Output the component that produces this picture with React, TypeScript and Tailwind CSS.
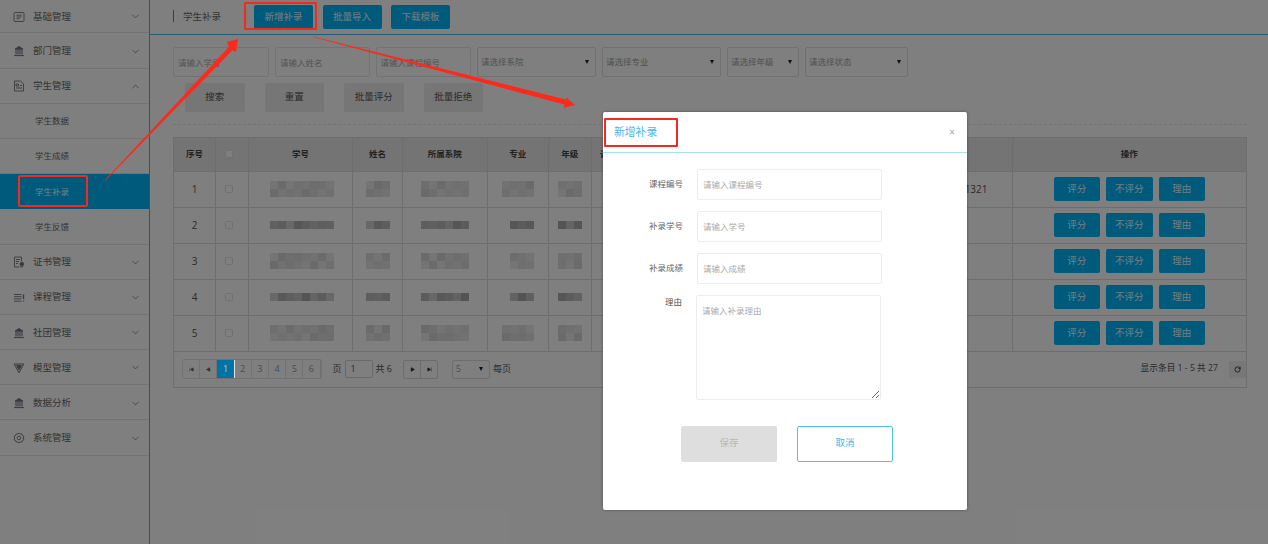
import React from "react";
import { ChevronDown, ChevronUp, RotateCw, SkipBack, SkipForward, Play } from "lucide-react";

const FONT = "font-['Open_Sans','Noto_Sans_CJK_SC',sans-serif]";

function IconBox() {
  return (
    <svg width="12" height="12" viewBox="0 0 12 12" fill="none" stroke="currentColor" strokeWidth="0.9">
      <rect x="1" y="1.5" width="10" height="9" rx="1" />
      <path d="M3.5 4.2h5M3.5 6h5M3.5 7.8h3" />
    </svg>
  );
}
function IconBank() {
  return (
    <svg width="12" height="12" viewBox="0 0 12 12" fill="none" stroke="currentColor" strokeWidth="1">
      <path d="M2 4.2 6 1.5l4 2.7z" fill="currentColor" />
      <path d="M3 5v4.6M5 5v4.6M7 5v4.6M9 5v4.6" strokeWidth="1.1" />
      <path d="M1 10.6h10" strokeWidth="1" />
    </svg>
  );
}
function IconStudent() {
  return (
    <svg width="12" height="12" viewBox="0 0 12 12" fill="none" stroke="currentColor" strokeWidth="0.9">
      <path d="M7.5 1H1.5v10h9V4z" />
      <path d="M3 4h2.5v2H3zM3 8h6M7 5.5h2" />
    </svg>
  );
}
function IconCert() {
  return (
    <svg width="12" height="12" viewBox="0 0 12 12" fill="none" stroke="currentColor" strokeWidth="0.9">
      <path d="M8.5 5V1H1.5v10h5" />
      <path d="M3 3.5h4M3 5.5h3M3 7.5h2" />
      <circle cx="8.8" cy="8" r="1.8" fill="currentColor" />
      <path d="M8 9.5v2M9.6 9.5v2" />
    </svg>
  );
}
function IconCourse() {
  return (
    <svg width="12" height="12" viewBox="0 0 12 12" fill="none" stroke="currentColor" strokeWidth="0.9">
      <path d="M1 2.5h7.5M1 4.7h7.5M1 6.9h7.5M1 9.2h7.5" />
      <path d="M10.5 2.5v4.6M10.5 8.4v1" strokeWidth="1.4" />
    </svg>
  );
}
function IconModel() {
  return (
    <svg width="12" height="12" viewBox="0 0 12 12" fill="none" stroke="currentColor" strokeWidth="1">
      <path d="M1.2 2h9.6L6 10.8z" />
      <path d="M3.6 3.6h4.8L6 7.8z" fill="currentColor" />
    </svg>
  );
}
function IconGear() {
  return (
    <svg width="12" height="12" viewBox="0 0 12 12" fill="none" stroke="currentColor" strokeWidth="0.9">
      <path d="M6 1l1.2 1.1 1.7-.2.5 1.6 1.5.8-.6 1.7.6 1.7-1.5.8-.5 1.6-1.7-.2L6 11l-1.2-1.1-1.7.2-.5-1.6-1.5-.8.6-1.7-.6-1.7 1.5-.8.5-1.6 1.7.2z" />
      <circle cx="6" cy="6" r="1.8" />
    </svg>
  );
}

function NavRow({ icon, label, open, first }: { icon: React.ReactNode; label: string; open?: boolean; first?: boolean }) {
  return (
    <div className={`flex items-center border-b border-[#e6e6e6] pl-[13px] pr-[8px] pt-[1.5px] text-[#666666] ${first ? "h-[33.4px]" : "h-[35.2px]"}`}>
      <span className="flex w-[20px] shrink-0 text-[#6f7480]">{icon}</span>
      <span className="flex-1 text-[9.5px]">{label}</span>
      {open ? <ChevronUp size={11} strokeWidth={1.5} /> : <ChevronDown size={11} strokeWidth={1.5} />}
    </div>
  );
}

function SubRow({ label, active }: { label: string; active?: boolean }) {
  return (
    <div className={`flex h-[35.2px] items-center pl-[35px] pt-[1.5px] text-[8.5px] ${active ? "bg-[#00b4f8] text-[#e6fbff]" : "border-b border-[#e6e6e6] text-[#666666]"}`}>
      {label}
    </div>
  );
}

function Sidebar() {
  return (
    <aside className="w-[150px] shrink-0 border-r border-[#4fb5e6]">
      <NavRow first icon={<IconBox />} label="基础管理" />
      <NavRow icon={<IconBank />} label="部门管理" />
      <NavRow icon={<IconStudent />} label="学生管理" open />
      <SubRow label="学生数据" />
      <SubRow label="学生成绩" />
      <SubRow label="学生补录" active />
      <SubRow label="学生反馈" />
      <NavRow icon={<IconCert />} label="证书管理" />
      <NavRow icon={<IconCourse />} label="课程管理" />
      <NavRow icon={<IconBank />} label="社团管理" />
      <NavRow icon={<IconModel />} label="模型管理" />
      <NavRow icon={<IconBank />} label="数据分析" />
      <NavRow icon={<IconGear />} label="系统管理" />
    </aside>
  );
}

function PrimaryBtn({ label, w, h }: { label: string; w: string; h: string }) {
  return (
    <button className={`flex items-center justify-center rounded-[2px] bg-[#00b4f8] text-[9.5px] text-[#e8fbff] ${w} ${h}`}>
      {label}
    </button>
  );
}

function Field({ ph, w }: { ph: string; w: string }) {
  return (
    <input
      placeholder={ph}
      className={`h-[30px] rounded-[2px] border border-[#e6e6e6] bg-white px-[4px] text-[8.5px] outline-none placeholder:text-[#a8a8a8] ${w}`}
    />
  );
}

function SelectBox({ ph, w }: { ph: string; w: string }) {
  return (
    <div className={`flex h-[30px] items-center justify-between rounded-[2px] border border-[#e0e0e0] bg-white pl-[3px] pr-[6px] text-[8.5px] text-[#a0a0a0] ${w}`}>
      <span>{ph}</span>
      <span className="h-0 w-0 border-x-[2.5px] border-t-[4px] border-x-transparent border-t-[#222]" />
    </div>
  );
}

function GrayBtn({ label }: { label: string }) {
  return (
    <button className="flex h-[29px] w-[59.5px] items-center justify-center rounded-[2px] bg-[#ececec] text-[9.5px] text-[#555]">
      {label}
    </button>
  );
}

const LIGHT = ["#e8e8e8", "#dedede", "#d8dce0", "#e4e4e4", "#d4d4d4", "#e0e0e0", "#eaeaea", "#dadada", "#d6d6d6", "#e2e2e2"];
const DARK = ["#c4c4c4", "#b8b8b8", "#b4b8bc", "#c0c0c0", "#acacac", "#bcbcbc", "#c8c8c8", "#b0b0b0", "#a8a8a8", "#d0d0d0"];

function Mosaic({ cols, rows, seed, lead = 0 }: { cols: number; rows: number; seed: number; lead?: number }) {
  const palette = rows === 1 ? DARK : LIGHT;
  const cells = Array.from({ length: cols * rows }, (_, i) =>
    i % cols < lead ? "transparent" : palette[(i * 7 + seed * 3 + (i % 3)) % palette.length]
  );
  return (
    <div className="mx-auto flex flex-wrap" style={{ width: cols * 8 }}>
      {cells.map((c, i) => (
        <div key={i} className="h-[8px] w-[8px]" style={{ backgroundColor: c }} />
      ))}
    </div>
  );
}

function Check() {
  return <span className="ml-[9px] block h-[8px] w-[8px] rounded-[1.5px] border border-[#e0e0e0] bg-white" />;
}

const HEAD = ["序号", "", "学号", "姓名", "所属系院", "专业", "年级", "课程名称", "课程编号", "补录学号", "操作"];
const MOSAIC_ROWS = [2, 1, 2, 1, 2];
const MAJOR_LEAD = [0, 1, 1, 1, 0];

const th = "h-[33px] border-r border-b border-[#dcdcdc] bg-[#e9e9e9] text-center text-[8.5px] font-bold text-[#444]";
const td = "h-[36px] border-r border-b border-[#dcdcdc] text-center align-middle text-[10px] text-[#555]";

function DataTable() {
  return (
    <table className="w-full table-fixed border-collapse">
      <colgroup>
        <col className="w-[41.5px]" />
        <col className="w-[33px]" />
        <col className="w-[104px]" />
        <col className="w-[50px]" />
        <col className="w-[84.5px]" />
        <col className="w-[61.5px]" />
        <col className="w-[42.5px]" />
        <col className="w-[52px]" />
        <col className="w-[150px]" />
        <col className="w-[219px]" />
        <col />
      </colgroup>
      <thead>
        <tr>
          {HEAD.map((h, i) => (
            <th key={i} className={`${th} ${i === 10 ? "border-r-0" : ""}`}>
              {i === 1 ? <Check /> : h}
            </th>
          ))}
        </tr>
      </thead>
      <tbody>
        {MOSAIC_ROWS.map((rows, r) => (
          <tr key={r}>
            <td className={td}>{r + 1}</td>
            <td className={td}><Check /></td>
            <td className={`${td} pl-[3px]`}><Mosaic cols={8} rows={rows} seed={r} /></td>
            <td className={td}><Mosaic cols={3} rows={rows} seed={r + 2} /></td>
            <td className={td}><Mosaic cols={6} rows={rows} seed={r + 4} /></td>
            <td className={td}><Mosaic cols={4} rows={rows} seed={r + 1} lead={MAJOR_LEAD[r]} /></td>
            <td className={td}><Mosaic cols={3} rows={rows} seed={r + 5} /></td>
            <td className={td} />
            <td className={td} />
            <td className={`${td} pr-[24px] text-right text-[8.5px]`}>{r === 0 ? "1321" : ""}</td>
            <td className={`${td} border-r-0`}>
              <div className="flex items-center justify-center gap-[6px]">
                <PrimaryBtn label="评分" w="w-[46px]" h="h-[24px]" />
                <PrimaryBtn label="不评分" w="w-[47px]" h="h-[24px]" />
                <PrimaryBtn label="理由" w="w-[46px]" h="h-[24px]" />
              </div>
            </td>
          </tr>
        ))}
      </tbody>
    </table>
  );
}

function PageCell({ children, active }: { children: React.ReactNode; active?: boolean }) {
  return (
    <span
      className={`flex h-[18px] w-[17.2px] items-center justify-center border-r border-[#e4e4e4] text-[9px] ${
        active ? "relative z-20 bg-[#0073a6] text-[#a8cfe0]" : "text-[#7a9cc6]"
      }`}
    >
      {children}
    </span>
  );
}

function Footer() {
  return (
    <div className="flex h-[35px] items-center justify-between pl-[8px] text-[9px] text-[#555]">
      <div className="flex items-center">
        <div className="flex rounded-[2px] border border-[#e4e4e4]">
          <PageCell><SkipBack size={5} fill="#666" stroke="#666" /></PageCell>
          <PageCell><Play size={5} fill="#666" stroke="#666" className="rotate-180" /></PageCell>
          {[1, 2, 3, 4, 5, 6].map((n) => (
            <PageCell key={n} active={n === 1}>{n}</PageCell>
          ))}
        </div>
        <span className="ml-[11px] text-[9px]">页</span>
        <span className="ml-[3px] flex h-[18px] w-[28px] items-center rounded-[2px] border border-[#d4d4d4] bg-white pl-[5px]">1</span>
        <span className="ml-[3px]">共 6</span>
        <div className="ml-[11px] flex rounded-[2px] border border-[#d8d8d8]">
          <span className="flex h-[17px] w-[17px] items-center justify-center border-r border-[#d8d8d8]"><Play size={5} fill="#333" stroke="#333" /></span>
          <span className="flex h-[17px] w-[16px] items-center justify-center"><SkipForward size={5} fill="#333" stroke="#333" /></span>
        </div>
        <div className="ml-[14px] flex h-[19px] w-[38px] items-center justify-between rounded-[2px] border border-[#dcdcdc] px-[3px] pr-[6px] text-[#a0a0a0]">
          <span>5</span>
          <span className="h-0 w-0 border-x-[2.5px] border-t-[4px] border-x-transparent border-t-[#222]" />
        </div>
        <span className="ml-[3px]">每页</span>
      </div>
      <div className="flex items-center">
        <span className="text-[8.7px]">显示条目 1 - 5 共 27</span>
        <span className="ml-[11px] flex h-[17px] w-[17px] items-center justify-center bg-[#eeeeee]">
          <RotateCw size={7} strokeWidth={3} className="text-[#333]" />
        </span>
      </div>
    </div>
  );
}

function ModalRow({ label, ph }: { label: string; ph: string }) {
  return (
    <div className="flex items-center">
      <span className="w-[66px] text-right text-[8.5px] text-[#666]">{label}</span>
      <input
        placeholder={ph}
        className="ml-[14px] h-[30.5px] w-[185px] rounded-[2px] border border-[#ececec] bg-white px-[5px] text-[8.5px] outline-none placeholder:text-[#aaaaaa]"
      />
    </div>
  );
}

function Modal() {
  return (
    <div className="absolute left-[603px] top-[112px] z-30 h-[398px] w-[364px] rounded-[2px] bg-white shadow-[0_0_3px_rgba(0,0,0,0.4)]">
      <div className="flex h-[41px] items-center justify-between border-b-[1.5px] border-[#a6e0f7] pl-[11px] pr-[12px]">
        <span className="text-[10.8px] text-[#46b6f0]">新增补录</span>
        <span className="text-[10px] leading-none text-[#aaaaaa]">×</span>
      </div>
      <div className="flex flex-col gap-[11.5px] pl-[14px] pt-[16px]">
        <ModalRow label="课程编号" ph="请输入课程编号" />
        <ModalRow label="补录学号" ph="请输入学号" />
        <ModalRow label="补录成绩" ph="请输入成绩" />
      </div>
      <div className="flex pl-[62px] pt-[11px]">
        <span className="w-[18px] pt-[1px] text-[8.5px] leading-[11px] text-[#555]">理由</span>
        <textarea
          placeholder="请输入补录理由"
          className="ml-[13px] h-[105px] w-[185px] rounded-[2px] border border-[#ececec] bg-white px-[5px] py-[9px] text-[8.5px] outline-none placeholder:text-[#aaaaaa]"
        />
      </div>
      <div className="flex gap-[20px] pl-[78px] pt-[26px]">
        <button className="flex h-[36px] w-[96px] items-center justify-center rounded-[2px] bg-[#dedede] text-[9.5px] text-[#b8b8b8]">保存</button>
        <button className="flex h-[36px] w-[96px] items-center justify-center rounded-[2px] border border-[#4fc0f2] bg-white text-[9.5px] text-[#46b6f0]">取消</button>
      </div>
    </div>
  );
}

function Annotations() {
  return (
    <>
      <svg className="pointer-events-none absolute left-0 top-0 z-40" width="1268" height="544" viewBox="0 0 1268 544">
        <path d="M105 181 104.6 180.4 228.8 47 227 42 238 39 236 52 232.5 50.2Z" fill="#fb2a1c" />
        <path d="M313 37 313.2 36.4 565.6 99.4 566.7 97.7 575 105 564 107.7 564.4 104.6Z" fill="#fb2a1c" />
      </svg>
      <div className="absolute left-[244px] top-[2px] z-40 h-[28px] w-[73px] rounded-[1px] border-2 border-[#f52a1c]" />
      <div className="absolute left-[18px] top-[175px] z-40 h-[32px] w-[70px] rounded-[2px] border-2 border-[#f52a1c]" />
      <div className="absolute left-[604px] top-[118px] z-40 h-[29px] w-[74px] rounded-[1px] border-2 border-[#f52a1c]" />
    </>
  );
}

export default function App() {
  return (
    <div className={`relative flex h-[544px] w-[1268px] overflow-hidden bg-white ${FONT}`}>
      <Sidebar />
      <main className="min-w-0 flex-1">
        <header className="flex h-[35px] items-start border-b border-[#4fb5e6] pl-[23px]">
          <div className="mt-[10px] h-[12px] border-l-[1.5px] border-[#00a8e8]" />
          <span className="ml-[9px] mt-[10.5px] text-[9.5px] leading-[11px] text-[#666]">学生补录</span>
          <div className="ml-[33px] mt-[5px] flex gap-[9.5px]">
            <PrimaryBtn label="新增补录" w="w-[59px]" h="h-[24px]" />
            <PrimaryBtn label="批量导入" w="w-[59px]" h="h-[24px]" />
            <PrimaryBtn label="下载模板" w="w-[59px]" h="h-[24px]" />
          </div>
        </header>
        <div className="mt-[12px] flex gap-[6px] pl-[23px]">
          <Field ph="请输入学号" w="w-[96px]" />
          <Field ph="请输入姓名" w="w-[94.5px]" />
          <Field ph="请输入课程编号" w="w-[95.5px]" />
          <SelectBox ph="请选择系院" w="w-[119px]" />
          <SelectBox ph="请选择专业" w="w-[119px]" />
          <SelectBox ph="请选择年级" w="w-[72px]" />
          <SelectBox ph="请选择状态" w="w-[103px]" />
        </div>
        <div className="mt-[6px] flex gap-[20px] pl-[35px]">
          <GrayBtn label="搜索" />
          <GrayBtn label="重置" />
          <GrayBtn label="批量评分" />
          <GrayBtn label="批量拒绝" />
        </div>
        <div className="ml-[23px] mr-[21px] mt-[12px] border-t border-dashed border-[#e8e8e8]" />
        <div className="ml-[23px] mt-[12px] w-[1074px] border border-[#dcdcdc]">
          <DataTable />
          <Footer />
        </div>
      </main>
      <div className="absolute inset-0 z-10 bg-black/50" />
      <Modal />
      <Annotations />
    </div>
  );
}
